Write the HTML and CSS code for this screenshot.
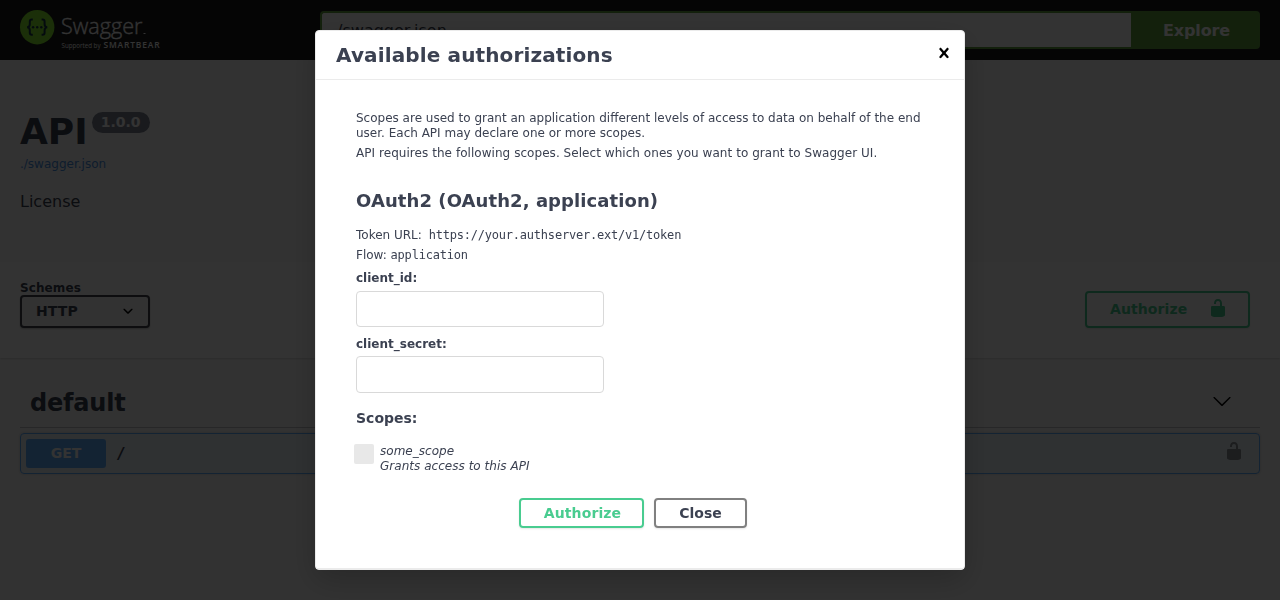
FILE: index.html
```html
<!DOCTYPE html>
<html lang="en">
<head>
<meta charset="utf-8">
<title>Swagger UI</title>
<link rel="stylesheet" href="styles.css">
</head>
<body>
<svg class="defs" width="0" height="0">
  <symbol id="unlocked" viewBox="0 0 20 20"><path d="M15.8 8H14V5.6C14 2.703 12.665 1 10 1 7.334 1 6 2.703 6 5.6V6h2v-.801C8 3.754 8.797 3 10 3c1.203 0 2 .754 2 2.199V8H4c-.553 0-1 .646-1 1.199V17c0 .549.428 1.139.951 1.307l1.197.387C5.672 18.861 6.55 19 7.1 19h5.8c.549 0 1.428-.139 1.951-.307l1.196-.387c.524-.167.953-.757.953-1.306V9.199C17 8.646 16.352 8 15.8 8z"/></symbol>
</svg>

<header class="topbar">
  <svg class="logo" width="150" height="40" viewBox="0 0 150 40">
    <circle cx="17.2" cy="17.2" r="17.2" fill="#85ea2d"/>
    <g fill="none" stroke="#173647" stroke-width="2">
      <path d="M12.8 9.6h-1q-2 0-2 2.200v2.400q0 2.700-2.600 3 2.600.3 2.600 3v2.400q0 2.200 2 2.200h1"/>
      <path d="M21.600 9.600h1q2 0 2 2.200v2.400q0 2.700 2.600 3-2.600.3-2.600 3v2.400q0 2.200-2 2.200h-1"/>
    </g>
    <g fill="#173647"><circle cx="13.100" cy="17.200" r="1.200"/><circle cx="17.200" cy="17.200" r="1.200"/><circle cx="21.300" cy="17.200" r="1.200"/></g>
    <text class="logo-name" x="41" y="24.300" textLength="81.500" lengthAdjust="spacingAndGlyphs">Swagger</text>
    <rect x="123.500" y="23" width="2" height="1" fill="#fff"/>
    <text class="logo-by" x="41.500" y="38" textLength="39">Supported by</text>
    <text class="logo-maker" x="83.500" y="38" textLength="57" lengthAdjust="spacingAndGlyphs">SMARTBEAR</text>
  </svg>
  <form class="spec-form">
    <input class="spec-input" type="text" value="./swagger.json">
    <button class="explore" type="button">Explore</button>
  </form>
</header>

<section class="info">
  <h2 class="title">API <span class="version">1.0.0</span></h2>
  <a class="spec-link">./swagger.json</a>
  <div class="license">License</div>
</section>

<section class="schemes">
  <label class="schemes-label">Schemes
    <span class="select">HTTP
      <svg width="20" height="20" viewBox="0 0 20 20"><path d="M13.418 7.859c.271-.268.709-.268.978 0 .27.268.272.701 0 .969l-3.908 3.830c-.27.268-.707.268-.979 0l-3.908-3.830c-.27-.267-.27-.701 0-.969.271-.268.709-.268.978 0L10 11l3.418-3.141z"/></svg>
    </span>
  </label>
  <button class="btn authorize page-authorize" type="button">Authorize <svg width="20" height="20"><use href="#unlocked"/></svg></button>
</section>

<main class="operations">
  <h4 class="tag">default
    <svg width="20" height="20" viewBox="0 0 20 20"><path d="M17.418 6.109c.272-.268.709-.268.979 0s.271.701 0 .969l-7.908 7.830c-.27.268-.707.268-.979 0l-7.908-7.830c-.27-.268-.27-.701 0-.969.271-.268.709-.268.979 0L10 13.250l7.418-7.141z"/></svg>
  </h4>
  <div class="op">
    <span class="method">GET</span>
    <span class="path">/</span>
    <svg class="op-lock" width="20" height="20"><use href="#unlocked"/></svg>
  </div>
</main>

<div class="backdrop">
  <div class="modal">
    <div class="modal-header">
      <h3>Available authorizations</h3>
      <svg width="20" height="20" viewBox="0 0 20 20"><path d="M14.348 14.849c-.469.469-1.229.469-1.697 0L10 11.819l-2.651 3.029c-.469.469-1.229.469-1.697 0-.469-.469-.469-1.229 0-1.697l2.758-3.150-2.759-3.152c-.469-.469-.469-1.228 0-1.697.469-.469 1.228-.469 1.697 0L10 8.183l2.651-3.031c.469-.469 1.228-.469 1.697 0 .469.469.469 1.229 0 1.697l-2.758 3.152 2.758 3.150c.469.469.469 1.229 0 1.698z"/></svg>
    </div>
    <div class="modal-body">
      <p>Scopes are used to grant an application different levels of access to data on behalf of the end user. Each API may declare one or more scopes.</p>
      <p class="requires">API requires the following scopes. Select which ones you want to grant to Swagger UI.</p>
      <h4 class="auth-name">OAuth2 (OAuth2, application)</h4>
      <p>Token URL: <code class="token-url">https://your.authserver.ext/v1/token</code></p>
      <p>Flow: <code>application</code></p>
      <div class="fields">
        <label class="field">client_id:<input type="text"></label>
        <label class="field">client_secret:<input type="text"></label>
      </div>
      <h2 class="scopes-title">Scopes:</h2>
      <div class="scope">
        <span class="check"></span>
        <div class="scope-text"><p>some_scope</p><p>Grants access to this API</p></div>
      </div>
      <div class="actions">
        <button class="btn authorize" type="button">Authorize</button>
        <button class="btn close" type="button">Close</button>
      </div>
    </div>
  </div>
</div>
</body>
</html>
```

FILE: styles.css
```css
* { box-sizing: border-box; }
html { overflow: hidden; }
body {
  margin: 0;
  height: 600px;
  overflow: hidden;
  background: #fafafa;
  color: #3b4151;
  font-family: "DejaVu Sans", sans-serif;
}
h2, h3, h4, p { margin: 0; }
svg { flex: none; }
.defs { position: absolute; }
button, input { font-family: inherit; }

.topbar {
  display: flex;
  height: 60px;
  padding: 10px 20px;
  background: #1b1b1b;
}
.logo { margin-right: 150px; overflow: visible; }
.logo text { fill: #fff; font-family: "Open Sans", sans-serif; }
.logo .logo-name { font-size: 22.5px; font-weight: 300; stroke: #fff; stroke-width: .35px; }
.logo .logo-by { font-size: 6.2px; }
.logo .logo-maker { font-size: 8px; font-weight: 600; letter-spacing: .8px; }
.spec-form { display: flex; flex: 1; height: 38px; margin-top: 1px; }
.spec-input {
  flex: 1;
  min-width: 0;
  padding: 0 10px;
  border: 2px solid #62a03f;
  border-right: 0;
  border-radius: 4px 0 0 4px;
  background: #fff;
  color: #3b4151;
  font-size: 16px;
}
.explore {
  width: 129px;
  padding: 0 0 0 2px;
  border: 0;
  border-radius: 0 4px 4px 0;
  background: #62a03f;
  color: #fff;
  font-size: 16px;
  font-weight: 700;
  letter-spacing: -.1px;
}

.info { height: 202px; padding: 51px 20px 0; }
.title { display: flex; height: 44px; font-size: 36px; line-height: 42px; }
.version {
  height: 21px;
  margin: 1px 0 0 4px;
  padding: 0 9px;
  border-radius: 11px;
  background: #7d8492;
  color: #fff;
  font-size: 14px;
  line-height: 20px;
}
.spec-link { display: block; color: #4990e2; font-size: 12px; line-height: 18px; }
.license { margin-top: 19px; font-size: 16px; line-height: 20px; }

.schemes {
  display: flex;
  justify-content: space-between;
  height: 96px;
  padding: 19px 30px 0 20px;
  background: #fff;
  box-shadow: 0 1px 2px rgba(0,0,0,.15);
}
.schemes-label { font-size: 12px; font-weight: 700; line-height: 14px; letter-spacing: .1px; }
.select {
  display: flex;
  align-items: center;
  justify-content: space-between;
  width: 130px;
  height: 33px;
  padding: 0 10px 2px 14px;
  border: 2px solid #41444e;
  border-radius: 4px;
  background: #f7f7f7;
  box-shadow: 0 1px 2px rgba(0,0,0,.25);
  font-size: 14px;
}
.select svg { fill: #000; }

.btn {
  width: 125px;
  height: 30px;
  padding: 0;
  border: 2px solid gray;
  border-radius: 4px;
  background: transparent;
  box-shadow: 0 1px 2px rgba(0,0,0,.1);
  color: #3b4151;
  font-size: 14px;
  font-weight: 700;
}
.btn.authorize { padding-left: 2px; border-color: #49cc90; color: #49cc90; letter-spacing: .1px; }
.btn.close { width: 93px; }
.btn.page-authorize {
  display: flex;
  align-items: center;
  justify-content: space-between;
  width: 165px;
  height: 37px;
  margin-top: 10px;
  padding: 0 20px 2px 23px;
}
.page-authorize svg { margin-top: -1px; fill: #49cc90; }

.operations { padding: 20px 20px 0; }
.tag {
  display: flex;
  align-items: center;
  justify-content: space-between;
  height: 50px;
  padding: 0 28px 0 10px;
  border-bottom: 1px solid rgba(59,65,81,.3);
  font-size: 24px;
  letter-spacing: -.2px;
}
.tag svg { margin-top: -3px; fill: #000; }
.op {
  display: flex;
  align-items: center;
  height: 41px;
  margin-top: 5px;
  padding: 0 15px 0 5px;
  border: 1px solid #61affe;
  border-radius: 4px;
  background: rgba(97,175,254,.1);
  box-shadow: 0 0 3px rgba(0,0,0,.19);
}
.method {
  width: 80px;
  height: 29px;
  border-radius: 3px;
  background: #61affe;
  color: #fff;
  font-size: 14px;
  font-weight: 700;
  line-height: 28px;
  text-align: center;
}
.path { flex: 1; padding-left: 10px; font: 600 16px "DejaVu Sans Mono", monospace; }
.op-lock { margin-top: -5px; opacity: .4; }

.backdrop {
  position: fixed;
  inset: 0;
  display: flex;
  align-items: center;
  justify-content: center;
  background: rgba(0,0,0,.8);
}
.modal {
  width: 650px;
  height: 540px;
  border: 1px solid #ebebeb;
  border-radius: 4px;
  background: #fff;
  box-shadow: 0 10px 30px rgba(0,0,0,.2);
}
.modal-header {
  display: flex;
  align-items: center;
  justify-content: space-between;
  height: 49px;
  padding: 0 10px 0 20px;
  border-bottom: 1px solid #ebebeb;
}
.modal-header h3 { font-size: 20px; letter-spacing: .13px; }
.modal-header svg { margin-top: -4px; }
.modal-body {
  height: 489px;
  padding: 31px 40px 0;
  border-bottom: 1px solid #ebebeb;
  font-size: 12px;
  line-height: 15px;
}
.modal-body p { margin-bottom: 5px; color: #3b4151; }
.modal-body .requires { letter-spacing: .05px; }
code { font: 12px "DejaVu Sans Mono", monospace; letter-spacing: -.21px; }
.token-url { margin-left: 3px; }
.auth-name { margin: 29px 0 17px; font-size: 18px; line-height: 21px; letter-spacing: .08px; }
.fields { display: grid; gap: 9.3px; padding-top: 3.2px; }
.field { display: block; font-weight: 700; }
.field input {
  display: block;
  width: 248px;
  height: 36.4px;
  margin-top: 4.7px;
  border: 1px solid #d9d9d9;
  border-radius: 4px;
  background: #fff;
}
.scopes-title { margin: 17.1px 0 18px; font-size: 14px; line-height: 16px; }
.scope { display: flex; gap: 6px; margin-left: -2px; }
.check { width: 20px; height: 20px; border-radius: 2px; background: #e8e8e8; }
.scope-text { font-style: italic; letter-spacing: .03px; }
.modal-body .scope-text p { margin: 0; }
.actions { display: flex; justify-content: center; gap: 10px; margin: 24px 14px 0 0; }
```
